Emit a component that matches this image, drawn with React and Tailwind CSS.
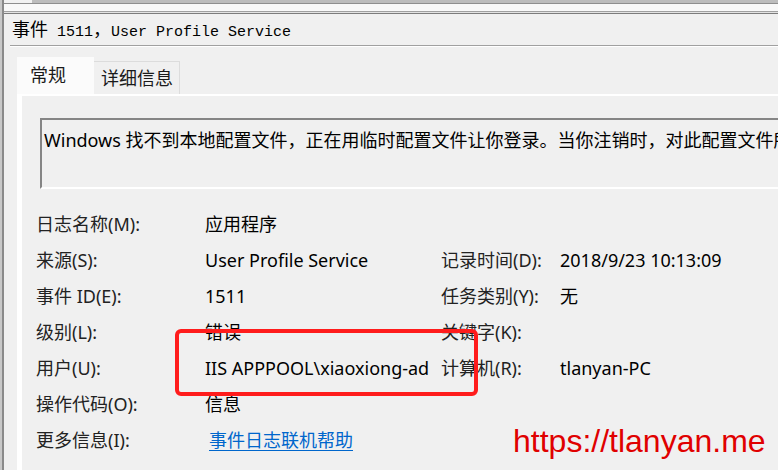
import React from "react";

const rows = [
  { label: "日志名称(M):", value: "应用程序" },
  { label: "来源(S):", value: "User Profile Service", label2: "记录时间(D):", value2: "2018/9/23 10:13:09" },
  { label: "事件 ID(E):", value: "1511", label2: "任务类别(Y):", value2: "无" },
  { label: "级别(L):", value: "错误", label2: "关键字(K):", value2: "" },
  { label: "用户(U):", value: "IIS APPPOOL\\xiaoxiong-admin", label2: "计算机(R):", value2: "tlanyan-PC" },
  { label: "操作代码(O):", value: "信息" },
  { label: "更多信息(I):", link: "事件日志联机帮助" },
];

function Mono({ children }) {
  return (
    <span className="font-['Liberation_Mono',monospace] text-[15px]">{children}</span>
  );
}

export default function App() {
  return (
    <div className="relative flex w-[778px] h-[470px] overflow-hidden bg-[#f0f0f0] font-['Noto_Sans','Noto_Sans_CJK_SC',sans-serif] text-[18px] text-[#1a1a1a]">
      {/* window left edge */}
      <div className="w-[2px] shrink-0 bg-[#c8c8c8]" />
      <div className="w-[2px] shrink-0 bg-[#8a8a8a]" />

      <div className="flex-1 min-w-0 flex flex-col">
        {/* top chrome */}
        <div className="flex h-[3px]">
          <div className="w-[28px] bg-[#f2f2f2]" />
          <div className="flex-1 bg-[#bdbdbd]" />
        </div>
        <div className="h-px bg-[#8f8f8f]" />
        <div className="h-[7px] bg-[#f9f9f9]" />
        <div className="h-px bg-[#a0a0a0]" />
        <div className="h-px bg-[#e3e3e3]" />
        <div className="h-px bg-[#7c7c7c]" />

        {/* title */}
        <div className="h-[31px] pl-[8px] pt-[1px] leading-[26px] text-black whitespace-pre">
          <span className="font-['Noto_Sans_CJK_SC',sans-serif] text-[18px]">事件</span>
          <Mono> 1511</Mono>
          <span className="font-['Noto_Sans_CJK_SC',sans-serif] text-[18px]">，</span>
          <Mono>User Profile Service</Mono>
        </div>
        <div className="ml-[6px] h-[2px] border-t border-[#a0a0a0] border-b border-b-white" />

        {/* tabs */}
        <div className="flex items-end h-[47px] pl-[13px]">
          <div className="w-[77px] h-[37px] bg-[#fbfbfb] pl-[13px] pt-[3px] leading-[30px]">常规</div>
          <div className="w-[86px] h-[33px] border-t border-r border-[#dcdcdc] pl-[7px] leading-[33px]">详细信息</div>
        </div>

        {/* tab page */}
        <div className="flex-1 ml-[13px] bg-white pl-[5px] pt-[2px]">
          <div className="h-full bg-[#f0f0f0] pt-[22px]">
            <div className="ml-[18px] w-[760px] h-[71px] border-t-2 border-l-2 border-[#858585] border-b-2 border-b-white pl-[2px] pt-[7px] leading-[26px] whitespace-nowrap overflow-hidden text-black">
              Windows 找不到本地配置文件，正在用临时配置文件让你登录。当你注销时，对此配置文件所做的更改将丢失。
            </div>

            <div className="mt-[17px] flex flex-col">
              {rows.map((r) => (
                <div key={r.label} className="flex h-[36px] items-center whitespace-nowrap">
                  <div className="w-[183px] shrink-0 pl-[14px] text-[#222]">{r.label}</div>
                  <div className="w-[236px] shrink-0 pr-[12px]">
                    <div className="overflow-hidden text-black">
                      {r.link ? (
                        <span className="ml-[4px] text-[#0066cc] underline underline-offset-[3px]">{r.link}</span>
                      ) : (
                        r.value
                      )}
                    </div>
                  </div>
                  <div className="w-[119px] shrink-0 text-[#222]">{r.label2}</div>
                  <div className="text-black">{r.value2}</div>
                </div>
              ))}
            </div>
          </div>
        </div>
      </div>

      {/* annotation overlay */}
      <div className="absolute left-[175px] top-[329px] w-[303px] h-[67px] border-4 border-[#ff1c1c] rounded-[6px]" />
      <div className="absolute left-[513px] top-[425px] font-['Liberation_Sans',Arial,sans-serif] text-[32px] leading-[32px] text-[#e00000]">
        https://tlanyan.me
      </div>
    </div>
  );
}
